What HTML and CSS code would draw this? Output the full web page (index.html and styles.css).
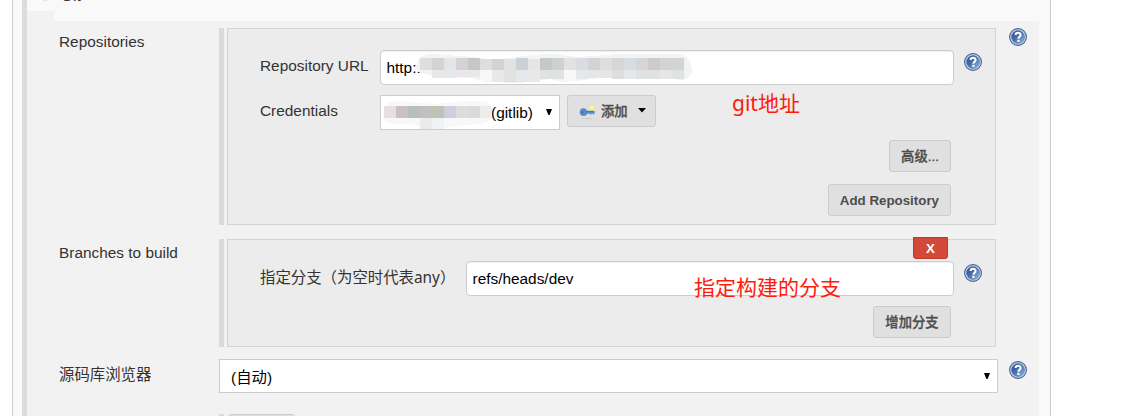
FILE: index.html
```html
<!DOCTYPE html>
<html lang="zh">
<head>
<meta charset="utf-8">
<title>Git</title>
<link rel="stylesheet" href="styles.css">
</head>
<body>
<svg class="defs" width="0" height="0" aria-hidden="true">
  <defs>
    <linearGradient id="blue" x1="0" y1="0" x2="1" y2="1"><stop offset="0" stop-color="#23488a"/><stop offset=".5" stop-color="#4b73b0"/><stop offset="1" stop-color="#9dbce0"/></linearGradient>
    <symbol id="help" viewBox="0 0 18 18">
      <circle cx="9" cy="9" r="8.4" fill="#d0dcec" stroke="#416399" stroke-width="1.1"/>
      <circle cx="9" cy="9" r="6.5" fill="url(#blue)" stroke="#5475aa" stroke-width=".6"/>
      <path d="M6.6 7.1C6.6 4.1 11.6 4.2 11.6 6.9C11.6 8.7 9.4 8.6 9.4 10.8" fill="none" stroke="#fff" stroke-width="2"/>
      <rect x="8.3" y="11.8" width="2.2" height="2.1" fill="#fff"/>
    </symbol>
  </defs>
</svg>
<main class="panel">
  <div class="section">
    <header class="heading"><i class="radio"></i><span class="name">Git</span></header>
    <div class="form">
      <div class="row repositories">
        <label class="label">Repositories</label>
        <div class="group"><div class="box">
          <div class="field">
            <label class="caption">Repository URL</label>
            <div class="input">http:.
              <svg class="mosaic url" width="276" height="32" viewBox="416 54 276 32" shape-rendering="crispEdges">
                <path fill="#f2f3f3" d="M419 58Q423 54 435 54L472 57Q486 60 510 58Q535 54 555 54L578 57L620 54H680Q690 56 692 70Q692 77 684 80L640 77L600 78L565 82L550 79L520 83L485 82L470 78L445 77L425 74Q416 73 416 66Z"/>
                <g>
                  <path fill="#dcdfdd" d="M420 58h12v12h-12zM480 59h12v11h-12zM600 58h12v12h-12z"/>
                  <path fill="#d5d2d3" d="M432 58h12v12h-12zM456 58h12v12h-12zM492 59h12v11h-12zM588 58h12v12h-12z"/>
                  <path fill="#e3e5e8" d="M444 58h12v12h-12zM528 59h12v11h-12z"/>
                  <path fill="#c6c8c7" d="M468 58h12v12h-12zM540 58h12v12h-12z"/>
                  <path fill="#e2e3dc" d="M504 59h12v11h-12zM564 58h12v12h-12z"/>
                  <path fill="#ccd1d8" d="M516 58h12v12h-12zM552 58h12v12h-12z"/>
                  <path fill="#d7dce1" d="M576 58h12v12h-12zM624 58h12v12h-12z"/>
                  <path fill="#d7d6d7" d="M612 58h12v12h-12zM636 58h12v12h-12z"/>
                  <path fill="#d0c9cf" d="M648 58h12v12h-12z"/>
                  <path fill="#d2d3d4" d="M660 58h24v12h-24z"/>
                  <path fill="#e9e7e7" d="M432 70h12v8h-12zM456 70h24v7h-24zM492 70h12v12h-12zM528 70h12v12h-12z"/>
                  <path fill="#e5e8eb" d="M444 70h12v8h-12zM516 70h12v12h-12zM576 70h12v9h-12zM624 70h12v9h-12z"/>
                  <path fill="#f8f8f8" d="M480 70h12v11h-12zM564 70h12v11h-12z"/>
                  <path fill="#e0e2e2" d="M504 70h12v12h-12zM540 70h24v9h-24zM636 70h24v9h-24zM672 70h12v9h-12z"/>
                  <path fill="#e2dddd" d="M612 70h12v9h-12z"/>
                  <path fill="#e5e7e7" d="M588 70h24v8h-24zM660 70h12v9h-12z"/>
                </g>
              </svg>
            </div>
            <svg class="help"><use href="#help"/></svg>
          </div>
          <div class="field credentials">
            <label class="caption">Credentials</label>
            <div class="select cred"><span>(gitlib)</span><i class="arrow"></i>
              <svg class="mosaic user" width="110" height="30" viewBox="383 100 110 30" shape-rendering="crispEdges">
                <path fill="#f8f8f8" d="M384 108Q387 101 398 101L435 104L463 101H484Q492 104 492 116Q489 124 479 124L455 126L440 129H425L410 124H394Q383 123 383 114Z"/>
                <path fill="#e5e1e1" d="M384 106h12v12h-12z"/><path fill="#c8c2c6" d="M396 106h12v12h-12z"/>
                <path fill="#b9c0ba" d="M408 106h12v12h-12z"/><path fill="#c2bfbd" d="M420 106h12v12h-12z"/>
                <path fill="#c2c1b7" d="M432 106h12v12h-12z"/><path fill="#cbd0da" d="M444 106h12v12h-12z"/>
                <path fill="#dfdcde" d="M456 106h12v12h-12z"/><path fill="#dadade" d="M468 106h12v12h-12z"/><path fill="#eeecea" d="M480 106h12v12h-12z"/>
                <path fill="#eaecec" d="M420 118h12v11h-12z"/><path fill="#f0f3f4" d="M432 118h12v11h-12z"/>
              </svg>
            </div>
            <button class="button add">
              <svg class="key" width="17" height="17" viewBox="0 0 17 17">
                <ellipse cx="8" cy="14.5" rx="6" ry=".8" fill="#cdcdcd"/>
                <circle cx="13" cy="4" r="3" fill="#f5ef78"/><circle cx="13" cy="3.8" r="1.4" fill="#fffbb0"/>
                <path d="M4.5 4.2C1.9 4.2.5 6.2.7 8.4C.9 10.8 2.7 12.1 4.7 12C6.8 11.9 7.8 11 8.3 9.8H11V10.6H12.3V9.8H14V10.2H15.3V9.4L16 8.2L15 6.8H8C7.5 5.2 6.4 4.2 4.5 4.2Z" fill="#5c8ac6"/>
                <path d="M7 7.5h8" stroke="#5079b4" stroke-width="1"/>
                <circle cx="3.5" cy="8.2" r="1" fill="#3f6cac"/>
              </svg>
              <span>添加</span>
              <svg class="caret" width="8" height="5"><path d="M0 0h8L4 4.6z"/></svg>
            </button>
            <div class="note first">git地址</div>
          </div>
          <div class="actions advanced"><button class="button">高级...</button></div>
          <div class="actions more"><button class="button">Add Repository</button></div>
        </div></div>
        <svg class="help"><use href="#help"/></svg>
      </div>
      <div class="row branches">
        <label class="label">Branches to build</label>
        <div class="group"><div class="box">
          <button class="delete">X</button>
          <div class="field">
            <label class="caption wide">指定分支<span class="paren" lang="zh-TW">（</span>为空时代表any<span class="paren" lang="zh-TW">）</span></label>
            <div class="input">refs/heads/dev<div class="note second">指定构建的分支</div></div>
            <svg class="help"><use href="#help"/></svg>
          </div>
          <div class="actions branch"><button class="button">增加分支</button></div>
        </div></div>
      </div>
      <div class="row browser">
        <label class="label">源码库浏览器</label>
        <div class="select auto"><span>(自动)</span><i class="arrow"></i></div>
        <svg class="help"><use href="#help"/></svg>
      </div>
      <div class="row extra">
        <span></span>
        <div class="group"><div class="stub"></div></div>
      </div>
    </div>
  </div>
</main>
</body>
</html>
```
FILE: styles.css
```css
* { box-sizing: border-box; }
body {
  margin: 0;
  height: 416px;
  overflow: hidden;
  background: #fff;
  color: #333;
  font: 15.4px/20px "Liberation Sans", "Noto Sans CJK SC", sans-serif;
}
.defs { position: absolute; }
.panel {
  width: 1039px;
  height: 416px;
  margin-left: 12px;
  padding: 0 11px 0 9px;
  border: solid #ccc;
  border-width: 0 1px;
  background: #f9f9f9;
  overflow: hidden;
}
.section { height: 416px; border-left: 5px solid #dcdcdc; }
.heading {
  display: flex;
  height: 21px;
  background: linear-gradient(#f2f2f2, #f2f2f2) 0 11px / 27px 10px no-repeat;
}
.radio {
  width: 10px;
  height: 10px;
  margin: -9px 0 0 13px;
  border-radius: 50%;
  background: #e0e0e0;
}
.name { margin: -14px 0 0 11px; }
.form { height: 395px; padding: 7px 0 0 32px; background: #f2f2f2; }
.row {
  display: grid;
  grid-template-columns: 160px 779px 18px;
  align-items: start;
}
.label { padding-top: 4px; }
.group {
  width: 777px;
  height: 100%;
  padding-left: 3px;
  border-left: 5px solid #dadada;
}
.box { height: 100%; border: 1px solid #d3d3d3; background: #ececec; }
.help { display: block; width: 18px; height: 18px; flex: none; margin-left: 11px; }
.repositories { height: 197px; }
.branches { height: 108px; margin-top: 14px; }
.browser { height: 34px; margin-top: 12px; }
.extra { height: 4px; margin-top: 21px; }
.field { display: flex; align-items: flex-start; height: 35px; padding-left: 32px; }
.repositories .box { padding-top: 21px; }
.field .help { margin-top: 3px; margin-left: 10px; }
.caption { width: 120px; padding-top: 6px; flex: none; white-space: nowrap; }
.wide { width: 206px; font-family: "Noto Sans", "Noto Sans CJK SC", sans-serif; }
.paren { font-family: "Noto Sans CJK TC", sans-serif; }
.input {
  position: relative;
  flex: none;
  width: 574px;
  height: 35px;
  padding: 7px 5.5px 0;
  border: 1px solid #ccc;
  border-radius: 4px;
  background: #fff;
  box-shadow: inset 0 1px 1px #0001;
  color: #000;
}
.mosaic { position: absolute; }
.url { left: 35px; top: 3px; }
.user { left: 2px; top: 4px; }
.credentials { margin-top: 10px; }
.select {
  position: relative;
  display: flex;
  justify-content: space-between;
  border: 1px solid #ccc;
  background: #fff;
  color: #000;
}
.arrow {
  width: 6px;
  height: 6px;
  background: #000;
  clip-path: polygon(0 0, 100% 0, 60% 100%, 40% 100%);
}
.cred { width: 180px; height: 35px; padding: 7px 7px 0 110px; }
.cred .arrow { margin-top: 6px; }
.auto { height: 34px; padding: 8px 7px 0 11px; }
.auto .arrow { margin-top: 5px; }
.button {
  height: 32px;
  padding: 1px 11px 0;
  border: 1px solid #ccc;
  border-radius: 3px;
  background: #e0e0e0;
  color: #4d4d4d;
  font: bold 13.33px/20px "Liberation Sans", "Noto Sans CJK SC", sans-serif;
  white-space: nowrap;
}
.add { display: flex; align-items: center; width: 89px; margin-left: 7px; }
.add, .advanced .button, .branch .button { font-weight: 500; -webkit-text-stroke: .3px #4d4d4d; }
.add span { margin-left: 5px; }
.key { flex: none; margin-top: 2px; }
.caret { flex: none; margin: -3px 0 0 10px; fill: #000; }
.note {
  color: #ff1a0d;
  font: 21px/28px "Noto Sans", "Noto Sans CJK SC", sans-serif;
  white-space: nowrap;
}
.first { margin: -6px 0 0 76px; }
.second { position: absolute; left: 227px; top: 11px; }
.actions { display: flex; justify-content: flex-end; padding-right: 44px; }
.advanced { margin-top: 10px; }
.advanced .button { width: 62px; }
.branch .button { width: 78px; }
.more { margin-top: 12px; }
.branches .input { width: 488px; }
.branches .caption { padding-top: 5px; }
.delete {
  display: block;
  width: 35px;
  height: 22px;
  margin: -3px 47px 2px auto;
  padding: 1px 0 0;
  border: 1px solid #bb3a2b;
  border-radius: 0 0 3px 3px;
  background: #d24939;
  color: #fff;
  font: bold 13.33px/20px "Liberation Sans", sans-serif;
}
.branch { margin-top: 10px; }
.browser .label { padding-top: 6px; }
.browser .help { margin-top: 2px; }
.stub {
  width: 67px;
  height: 32px;
  margin-left: 1px;
  border: 1px solid #ccc;
  border-radius: 3px;
  background: #e0e0e0;
}
```
